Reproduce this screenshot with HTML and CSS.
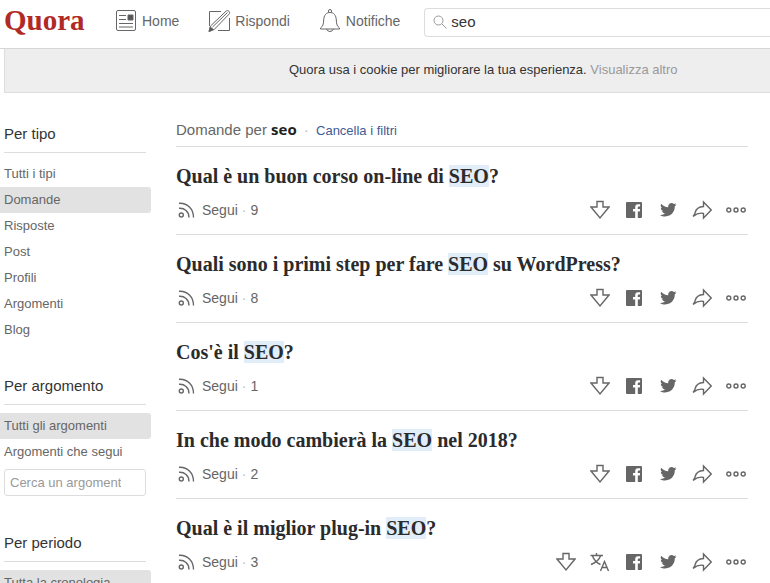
FILE: index.html
```
<!DOCTYPE html>
<html lang="it">
<head>
  <meta charset="UTF-8" />
  <meta name="viewport" content="width=device-width, initial-scale=1" />
  <title>seo - Quora</title>
  <link rel="stylesheet" href="styles.css">
</head>
<body>
  <!-- Shared icons -->
  <svg class="sprite" aria-hidden="true">
    <symbol id="icon-rss" viewBox="0 0 20 20">
      <circle cx="5.3" cy="15" r="2" />
      <path d="M3 8.300C8.500 7.800 13 11.500 13 17.500M3 3.300C11.500 2.800 17.500 9 17.500 17.500" />
    </symbol>
    <symbol id="icon-down" viewBox="0 0 20 20">
      <path d="M7 1.500h6v5.500h6L10 18 1 7h6z" />
    </symbol>
    <symbol id="icon-facebook" viewBox="0 0 20 20">
      <path fill-rule="evenodd" d="M3 2h14q1 0 1 1v14q0 1-1 1h-3.200v-6.500h2l.3-2.500h-2.300V7.500c0-.8.300-1.100 1.100-1.100h1.200V4.200h-2c-2.100 0-2.900 1.200-2.900 3V9H9v2.500h2.200V18H3q-1 0-1-1V3q0-1 1-1z" />
    </symbol>
    <symbol id="icon-twitter" viewBox="0 0 20 20">
      <path d="M18.500 4.500c-.6.300-1.200.5-1.900.6.700-.4 1.200-1 1.400-1.800-.6.400-1.300.6-2.100.8a3.400 3.400 0 0 0-5.700 3.100C7.400 7.100 5 5.800 3.300 3.700a3.400 3.400 0 0 0 1 4.500c-.5 0-1-.2-1.500-.4 0 1.600 1.100 3 2.700 3.300-.5.100-1 .1-1.500 0 .4 1.400 1.600 2.300 3.100 2.400A6.800 6.800 0 0 1 2 14.900c1.500 1 3.300 1.500 5.200 1.500 6.300 0 9.800-5.200 9.600-10.100.7-.5 1.200-1.100 1.700-1.800z" />
    </symbol>
    <symbol id="icon-share" viewBox="0 0 20 20">
      <path d="M11.500 2l7.700 8-7.700 8v-4.500c-3.500-1-7 .3-10.500 3 1.200-1.300 1.800-2.200 2.200-4C4 9 7 6.800 11.500 6.500z" />
    </symbol>
    <symbol id="icon-more" viewBox="0 0 20 20">
      <circle cx="2.800" cy="10" r="2" />
      <circle cx="10" cy="10" r="2" />
      <circle cx="17.200" cy="10" r="2" />
    </symbol>
    <symbol id="icon-translate" viewBox="0 0 20 20">
      <path d="M.5 3.500h12.500M6.500 1v2.500M2.500 4c1.500 4 4.500 7 8 8.500M10.500 4C9 8 5 11 1 12.500M10.500 19L14.500 9.500 18.500 19M12 15.500h5" />
    </symbol>
  </svg>

  <header class="site-header">
    <a class="logo" href="#">Quora</a>
    <nav class="main-nav">
      <a href="#">
        <svg class="nav-icon" viewBox="0 0 24 24">
          <rect x="2.500" y="1.500" width="19" height="20" rx="1.500" />
          <path d="M5 6.500h7M5 10.500h7M5 14.500h14M5 18h14" />
          <path class="solid" d="M14 6h5v5h-5z" />
        </svg>
        Home
      </a>
      <a href="#">
        <svg class="nav-icon" viewBox="0 0 24 24">
          <path d="M14 2.500H2.500V17M22.500 9v12.500H11" />
          <path d="M2 22.500l1.500-5.500L19 2.200c2-1.800 4.800.8 3 3L7.200 20.500zM5.500 18L20.500 3.500" />
          <path class="solid" d="M2 22.500l1.200-4.500 3.300 2.500z" />
        </svg>
        Rispondi
      </a>
      <a href="#">
        <svg class="nav-icon" viewBox="0 0 24 24">
          <path d="M10.500 3.500V2q0-1.500 1.500-1.500T13.500 2v1.500" />
          <path d="M2.500 19c2.500-2 3-3.500 3.200-8 .2-4.500 2.300-7.500 6.300-7.500s6.100 3 6.300 7.500c.2 4.500.7 6 3.200 8v1h-19zM8.500 20q1 2.500 3.500 2.500t3.500-2.500" />
        </svg>
        Notifiche
      </a>
    </nav>
    <form class="search">
      <svg class="search-icon" viewBox="0 0 14 14">
        <circle cx="5.500" cy="5.500" r="4.500" />
        <path d="M9 9l4.500 4.500" />
      </svg>
      <input type="text" value="seo" aria-label="Cerca su Quora" />
    </form>
  </header>

  <div class="cookie-bar">
    Quora usa i cookie per migliorare la tua esperienza. <a href="#">Visualizza altro</a>
  </div>

  <div class="page">
    <aside class="sidebar">
      <section class="filter">
        <h2>Per tipo</h2>
        <ul>
          <li><a href="#">Tutti i tipi</a></li>
          <li><a class="selected" href="#">Domande</a></li>
          <li><a href="#">Risposte</a></li>
          <li><a href="#">Post</a></li>
          <li><a href="#">Profili</a></li>
          <li><a href="#">Argomenti</a></li>
          <li><a href="#">Blog</a></li>
        </ul>
      </section>
      <section class="filter">
        <h2>Per argomento</h2>
        <ul>
          <li><a class="selected" href="#">Tutti gli argomenti</a></li>
          <li><a href="#">Argomenti che segui</a></li>
        </ul>
        <input class="topic-input" type="text" placeholder="Cerca un argomento" aria-label="Cerca un argomento" />
      </section>
      <section class="filter">
        <h2>Per periodo</h2>
        <ul>
          <li><a class="selected" href="#">Tutta la cronologia</a></li>
        </ul>
      </section>
    </aside>

    <main class="results">
      <div class="results-header">
        Domande per <strong>seo</strong> <span class="dot">·</span> <a href="#">Cancella i filtri</a>
      </div>

      <article class="question">
        <h3>Qual è un buon corso on-line di <mark>SEO</mark>?</h3>
        <div class="question-bar">
          <button class="follow"><svg class="icon"><use href="#icon-rss" /></svg>Segui <span class="dot">·</span> 9</button>
          <div class="actions">
            <button aria-label="Voto negativo"><svg class="icon"><use href="#icon-down" /></svg></button>
            <button aria-label="Facebook"><svg class="icon filled"><use href="#icon-facebook" /></svg></button>
            <button aria-label="Twitter"><svg class="icon filled"><use href="#icon-twitter" /></svg></button>
            <button aria-label="Condividi"><svg class="icon"><use href="#icon-share" /></svg></button>
            <button aria-label="Altro"><svg class="icon"><use href="#icon-more" /></svg></button>
          </div>
        </div>
      </article>

      <article class="question">
        <h3>Quali sono i primi step per fare <mark>SEO</mark> su WordPress?</h3>
        <div class="question-bar">
          <button class="follow"><svg class="icon"><use href="#icon-rss" /></svg>Segui <span class="dot">·</span> 8</button>
          <div class="actions">
            <button aria-label="Voto negativo"><svg class="icon"><use href="#icon-down" /></svg></button>
            <button aria-label="Facebook"><svg class="icon filled"><use href="#icon-facebook" /></svg></button>
            <button aria-label="Twitter"><svg class="icon filled"><use href="#icon-twitter" /></svg></button>
            <button aria-label="Condividi"><svg class="icon"><use href="#icon-share" /></svg></button>
            <button aria-label="Altro"><svg class="icon"><use href="#icon-more" /></svg></button>
          </div>
        </div>
      </article>

      <article class="question">
        <h3>Cos'è il <mark>SEO</mark>?</h3>
        <div class="question-bar">
          <button class="follow"><svg class="icon"><use href="#icon-rss" /></svg>Segui <span class="dot">·</span> 1</button>
          <div class="actions">
            <button aria-label="Voto negativo"><svg class="icon"><use href="#icon-down" /></svg></button>
            <button aria-label="Facebook"><svg class="icon filled"><use href="#icon-facebook" /></svg></button>
            <button aria-label="Twitter"><svg class="icon filled"><use href="#icon-twitter" /></svg></button>
            <button aria-label="Condividi"><svg class="icon"><use href="#icon-share" /></svg></button>
            <button aria-label="Altro"><svg class="icon"><use href="#icon-more" /></svg></button>
          </div>
        </div>
      </article>

      <article class="question">
        <h3>In che modo cambierà la <mark>SEO</mark> nel 2018?</h3>
        <div class="question-bar">
          <button class="follow"><svg class="icon"><use href="#icon-rss" /></svg>Segui <span class="dot">·</span> 2</button>
          <div class="actions">
            <button aria-label="Voto negativo"><svg class="icon"><use href="#icon-down" /></svg></button>
            <button aria-label="Facebook"><svg class="icon filled"><use href="#icon-facebook" /></svg></button>
            <button aria-label="Twitter"><svg class="icon filled"><use href="#icon-twitter" /></svg></button>
            <button aria-label="Condividi"><svg class="icon"><use href="#icon-share" /></svg></button>
            <button aria-label="Altro"><svg class="icon"><use href="#icon-more" /></svg></button>
          </div>
        </div>
      </article>

      <article class="question">
        <h3>Qual è il miglior plug-in <mark>SEO</mark>?</h3>
        <div class="question-bar">
          <button class="follow"><svg class="icon"><use href="#icon-rss" /></svg>Segui <span class="dot">·</span> 3</button>
          <div class="actions">
            <button aria-label="Voto negativo"><svg class="icon"><use href="#icon-down" /></svg></button>
            <button aria-label="Traduci"><svg class="icon"><use href="#icon-translate" /></svg></button>
            <button aria-label="Facebook"><svg class="icon filled"><use href="#icon-facebook" /></svg></button>
            <button aria-label="Twitter"><svg class="icon filled"><use href="#icon-twitter" /></svg></button>
            <button aria-label="Condividi"><svg class="icon"><use href="#icon-share" /></svg></button>
            <button aria-label="Altro"><svg class="icon"><use href="#icon-more" /></svg></button>
          </div>
        </div>
      </article>
    </main>
  </div>
</body>
</html>
```
FILE: styles.css
```
/* Reset and base */
* {
  box-sizing: border-box;
  margin: 0;
  padding: 0;
}

body {
  background: #fff;
  color: #333;
  font-family: "Liberation Sans", Arial, sans-serif;
  font-size: 13px;
  line-height: 20px;
}

a {
  color: #666;
  text-decoration: none;
}

ul {
  list-style: none;
}

button {
  border: none;
  background: none;
  color: #666;
  font: inherit;
  cursor: pointer;
}

.sprite {
  display: none;
}

/* Header */
.site-header {
  display: flex;
  align-items: center;
  height: 49px;
  padding: 0 0 4px 4px;
  border-bottom: 1px solid #d6d6d6;
}

.logo {
  width: 110px;
  padding-bottom: 4px;
  color: #b02a26;
  font-family: "Liberation Serif", "Times New Roman", serif;
  font-size: 29px;
  font-weight: bold;
  line-height: 32px;
}

.main-nav {
  display: flex;
  gap: 28px;
  margin-right: 24px;
  padding-bottom: 2px;
  font-size: 14px;
}

.main-nav a {
  display: flex;
  align-items: center;
  gap: 4px;
}

.nav-icon {
  width: 24px;
  height: 24px;
  fill: none;
  stroke: #666;
}

.nav-icon .solid {
  fill: #555;
}

.search {
  display: flex;
  align-items: center;
  flex: 1;
  gap: 4px;
  height: 29px;
  padding-left: 8px;
  border: 1px solid #ddd;
  border-right: none;
  border-radius: 4px 0 0 4px;
}

.search-icon {
  width: 14px;
  height: 14px;
  fill: none;
  stroke: #999;
}

.search input {
  flex: 1;
  min-width: 0;
  border: none;
  outline: none;
  color: #333;
  font: inherit;
  font-size: 15px;
}

.cookie-bar {
  margin-left: 4px;
  padding: 11px 0 12px 284px;
  border: 1px solid #ddd;
  border-width: 0 0 1px 1px;
  background: #eee;
}

.cookie-bar a {
  color: #999;
}

/* Columns */
.page {
  display: grid;
  grid-template-columns: 151px 1fr;
  gap: 25px;
  padding: 27px 22px 0 0;
}

.sidebar {
  padding-top: 4px;
}

.filter {
  margin-bottom: 33px;
}

.filter h2 {
  margin: 0 5px 8px 4px;
  padding-bottom: 8px;
  border-bottom: 1px solid #ddd;
  font-size: 15px;
  font-weight: normal;
}

.filter li a {
  display: block;
  padding: 3px 4px;
  border-radius: 0 3px 3px 0;
}

.filter li .selected {
  background: #e2e2e2;
}

.topic-input {
  display: block;
  width: 142px;
  height: 27px;
  margin: 4px 4px 37px;
  padding: 0 24px 0 5px;
  border: 1px solid #ddd;
  border-radius: 3px;
  font: inherit;
}

.topic-input::placeholder {
  color: #999;
}

/* Results */
.results-header {
  padding-bottom: 5px;
  border-bottom: 1px solid #ddd;
  color: #666;
  font-size: 15px;
}

.results-header strong {
  color: #222;
  font-family: "Open Sans", sans-serif;
  line-height: 16px;
}

.results-header a {
  color: #3f5c96;
  font-size: 13px;
}

.results-header .dot {
  margin: 0 3px;
}

.dot {
  color: #bbb;
}

.question {
  padding: 17px 0 14px;
  border-bottom: 1px solid #ddd;
}

.question h3 {
  color: #2b2b2b;
  font-family: "Liberation Serif", "Times New Roman", serif;
  font-size: 20px;
  line-height: 24px;
}

.question mark {
  background: #e1edf9;
  color: inherit;
}

.question-bar {
  display: flex;
  justify-content: space-between;
  align-items: center;
  margin-top: 12px;
}

.follow {
  display: flex;
  align-items: center;
  gap: 4px;
  font-size: 14px;
}

.follow .icon {
  margin-right: 2px;
}

.actions {
  display: flex;
  gap: 14px;
  padding-right: 2px;
}

.actions button {
  height: 20px;
}

.icon {
  display: block;
  width: 20px;
  height: 20px;
  fill: none;
  stroke: #666;
  stroke-width: 1.4;
}

.icon.filled {
  fill: #666;
  stroke: none;
}
```
